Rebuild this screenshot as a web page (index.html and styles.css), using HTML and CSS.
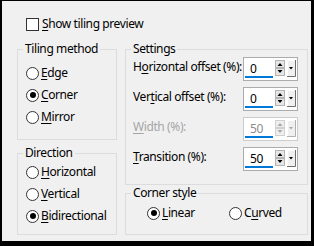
FILE: index.html
```html
<!DOCTYPE html>
<html lang="en">
<head>
  <meta charset="UTF-8" />
  <title>Tiling options</title>
  <link rel="stylesheet" href="styles.css">
</head>
<body>
  <div class="dialog">
    <label class="check-row"><span class="checkbox"></span><span><u>S</u>how tiling preview</span></label>

    <div class="columns">
      <div class="col-left">
        <fieldset class="group tiling">
          <legend>Tiling method</legend>
          <div class="inner">
            <label class="radio"><span class="dot"></span><span><u>E</u>dge</span></label>
            <label class="radio"><span class="dot on"></span><span><u>C</u>orner</span></label>
            <label class="radio"><span class="dot"></span><span><u>M</u>irror</span></label>
          </div>
        </fieldset>

        <fieldset class="group direction">
          <legend>Direction</legend>
          <div class="inner">
            <label class="radio"><span class="dot"></span><span><u>H</u>orizontal</span></label>
            <label class="radio"><span class="dot"></span><span><u>V</u>ertical</span></label>
            <label class="radio"><span class="dot on"></span><span><u>B</u>idirectional</span></label>
          </div>
        </fieldset>
      </div>

      <div class="col-right">
        <fieldset class="group settings">
          <legend>Settings</legend>
          <div class="inner">
            <div class="row">
              <span class="lbl">H<u>o</u>rizontal offset (%):</span>
              <div class="spin">
                <span class="spin-value">0</span>
                <svg class="spin-btns" width="21" height="17" viewBox="0 0 21 17">
                  <rect x="0.5" y="0.5" width="9" height="7" fill="#e6e6e6" stroke="#b4b4b4"/>
                  <rect x="0.5" y="8.5" width="9" height="7" fill="#e6e6e6" stroke="#b4b4b4"/>
                  <polygon points="2.5,6 5,3 7.5,6" fill="#000"/>
                  <polygon points="2.5,10 5,13 7.5,10" fill="#000"/>
                  <rect x="12" y="0" width="8" height="16" fill="#f0f0f0"/>
                  <path d="M12.5 16V0.5H19.5" fill="none" stroke="#fff"/>
                  <path d="M20.5 0V16.5H12" fill="none" stroke="#6e6e6e"/>
                  <polygon points="14,7 18,7 16,9.5" fill="#000"/>
                </svg>
              </div>
            </div>
            <div class="row">
              <span class="lbl">Ver<u>t</u>ical offset (%):</span>
              <div class="spin">
                <span class="spin-value">0</span>
                <svg class="spin-btns" width="21" height="17" viewBox="0 0 21 17">
                  <rect x="0.5" y="0.5" width="9" height="7" fill="#e6e6e6" stroke="#b4b4b4"/>
                  <rect x="0.5" y="8.5" width="9" height="7" fill="#e6e6e6" stroke="#b4b4b4"/>
                  <polygon points="2.5,6 5,3 7.5,6" fill="#000"/>
                  <polygon points="2.5,10 5,13 7.5,10" fill="#000"/>
                  <rect x="12" y="0" width="8" height="16" fill="#f0f0f0"/>
                  <path d="M12.5 16V0.5H19.5" fill="none" stroke="#fff"/>
                  <path d="M20.5 0V16.5H12" fill="none" stroke="#6e6e6e"/>
                  <polygon points="14,7 18,7 16,9.5" fill="#000"/>
                </svg>
              </div>
            </div>
            <div class="row disabled">
              <span class="lbl"><u>W</u>idth (%):</span>
              <div class="spin">
                <span class="spin-value">50</span>
                <svg class="spin-btns" width="21" height="17" viewBox="0 0 21 17">
                  <rect x="0.5" y="0.5" width="9" height="7" fill="#efefef" stroke="#d0d0d0"/>
                  <rect x="0.5" y="8.5" width="9" height="7" fill="#efefef" stroke="#d0d0d0"/>
                  <polygon points="2.5,6 5,3 7.5,6" fill="#a8a8a8"/>
                  <polygon points="2.5,10 5,13 7.5,10" fill="#a8a8a8"/>
                  <rect x="12" y="0" width="8" height="16" fill="#f0f0f0"/>
                  <path d="M12.5 16V0.5H19.5" fill="none" stroke="#fff"/>
                  <path d="M20.5 0V16.5H12" fill="none" stroke="#b0b0b0"/>
                  <polygon points="14,7 18,7 16,9.5" fill="#a8a8a8"/>
                </svg>
              </div>
            </div>
            <div class="row">
              <span class="lbl"><u>T</u>ransition (%):</span>
              <div class="spin">
                <span class="spin-value">50</span>
                <svg class="spin-btns" width="21" height="17" viewBox="0 0 21 17">
                  <rect x="0.5" y="0.5" width="9" height="7" fill="#e6e6e6" stroke="#b4b4b4"/>
                  <rect x="0.5" y="8.5" width="9" height="7" fill="#e6e6e6" stroke="#b4b4b4"/>
                  <polygon points="2.5,6 5,3 7.5,6" fill="#000"/>
                  <polygon points="2.5,10 5,13 7.5,10" fill="#000"/>
                  <rect x="12" y="0" width="8" height="16" fill="#f0f0f0"/>
                  <path d="M12.5 16V0.5H19.5" fill="none" stroke="#fff"/>
                  <path d="M20.5 0V16.5H12" fill="none" stroke="#6e6e6e"/>
                  <polygon points="14,7 18,7 16,9.5" fill="#000"/>
                </svg>
              </div>
            </div>
          </div>
        </fieldset>

        <fieldset class="group corner">
          <legend>Corner style</legend>
          <div class="inner">
            <label class="radio linear"><span class="dot on"></span><span><u>L</u>inear</span></label>
            <label class="radio"><span class="dot"></span><span>C<u>u</u>rved</span></label>
          </div>
        </fieldset>
      </div>
    </div>
  </div>
</body>
</html>
```

FILE: styles.css
```css
body {
  margin: 0;
  font-family: "Noto Sans", "Open Sans", sans-serif;
  font-size: 12px;
  letter-spacing: -0.4px;
  color: #000;
}

.dialog {
  box-sizing: border-box;
  width: 314px;
  height: 246px;
  background-color: #f0f0f0;
  border-style: solid;
  border-color: #000;
  border-width: 1px 3px 5px 2px;
}

u {
  text-underline-offset: 2px;
}

.check-row {
  display: flex;
  align-items: center;
  gap: 3px;
  height: 14px;
  margin: 16px 0 0 24px;
  line-height: 14px;
}

.checkbox {
  box-sizing: border-box;
  width: 13px;
  height: 13px;
  border: 1px solid #333;
  background-color: #fff;
}

.columns {
  display: flex;
  gap: 8px;
  margin: 10px 0 0 15px;
}

.col-left {
  display: flex;
  flex-direction: column;
  gap: 5px;
  width: 100px;
}

.col-right {
  display: flex;
  flex-direction: column;
  width: 183px;
}

.group {
  box-sizing: border-box;
  margin: 0;
  padding: 0;
  min-width: 0;
  border: 1px solid #dcdcdc;
}

.group legend {
  margin-left: 5px;
  padding: 0 2px;
  line-height: 16px;
}

.tiling {
  height: 99px;
}

.tiling .inner {
  padding: 5px 0 0 8px;
}

.direction {
  height: 90px;
}

.direction .inner {
  padding: 0 0 0 8px;
}

.radio {
  display: flex;
  align-items: center;
  gap: 2px;
  height: 22px;
  line-height: 16px;
  white-space: nowrap;
}

.dot {
  box-sizing: border-box;
  position: relative;
  width: 13px;
  height: 13px;
  border: 1px solid #333;
  border-radius: 50%;
  background-color: #fff;
}

.dot.on::after {
  content: "";
  position: absolute;
  left: 2.5px;
  top: 2.5px;
  width: 6px;
  height: 6px;
  border-radius: 50%;
  background-color: #000;
}

.settings {
  height: 144px;
}

.settings .inner {
  padding: 0 0 0 7px;
}

.row {
  display: flex;
  justify-content: space-between;
  height: 24px;
  margin-bottom: 6px;
}

.lbl {
  margin-top: 2px;
  line-height: 16px;
  white-space: nowrap;
}

.row.disabled .lbl {
  color: #a6a6a6;
}

.spin {
  box-sizing: border-box;
  display: flex;
  align-items: flex-start;
  flex: none;
  width: 55px;
  height: 24px;
  margin-right: 9px;
  border: 1px solid #acacac;
  background-color: #fff;
}

.row.disabled .spin {
  border-color: #cccccc;
}

.spin-value {
  width: 28px;
  height: 19px;
  margin: 1px 0 0 1px;
  padding-left: 5px;
  box-sizing: border-box;
  line-height: 19px;
  border-bottom: 2px solid #0078d7;
}

.row.disabled .spin-value {
  color: #8c8c8c;
}

.spin-btns {
  margin: 2px 0 0 2px;
}

.corner {
  height: 50px;
}

.corner .inner {
  display: flex;
  padding: 1px 0 0 21px;
}

.radio.linear {
  width: 82px;
}
```
